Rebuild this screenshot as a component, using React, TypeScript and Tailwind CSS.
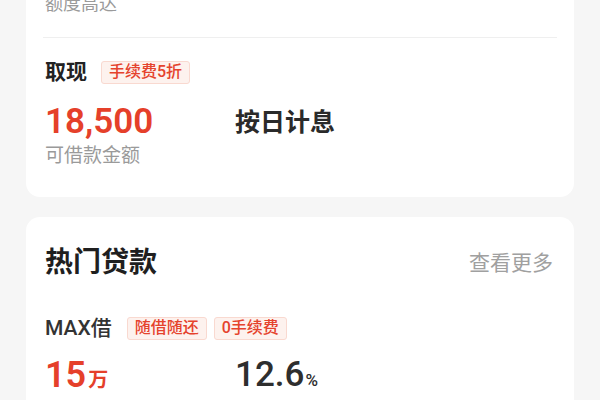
import React from "react";

const font = { fontFamily: '"Roboto", "Noto Sans CJK SC", sans-serif' };

function Tag({ children }: { children: React.ReactNode }) {
  return (
    <span className="inline-flex h-[23px] items-center rounded-[3px] border border-[#f9d9d0] bg-[#fdf2ee] px-[7px] text-[16px] font-medium leading-none text-[#e5432d]">
      {children}
    </span>
  );
}

export default function App() {
  return (
    <div style={font} className="h-[400px] w-[600px] overflow-hidden bg-[#f6f6f6] px-[26px]">
      <div className="rounded-b-[14px] bg-white px-[19px] pb-[29px]">
        <div className="mt-[-8px] h-[24px] text-[18px] leading-[24px] text-[#9a9a9a]">额度高达</div>
        <div className="mr-[-2px] ml-[-2px] mt-[21px] h-px bg-[#efefef]" />
        <div className="mt-[22px] flex h-[24px] items-center">
          <span className="text-[21px] font-bold leading-none text-[#222]">取现</span>
          <span className="ml-[14px]">
            <Tag>手续费5折</Tag>
          </span>
        </div>
        <div className="mt-[18px] flex h-[40px] items-center">
          <span className="w-[190px] text-[35px] font-semibold leading-[40px] text-[#e5402a]">18,500</span>
          <span className="text-[25px] font-bold leading-none text-[#2a2a2a]">按日计息</span>
        </div>
        <div className="mt-[2px] h-[24px] text-[19px] leading-[24px] text-[#9a9a9a]">可借款金额</div>
      </div>

      <div className="mt-[20px] rounded-[14px] bg-white pl-[19px] pr-[21px] pt-[28px]">
        <div className="flex h-[36px] items-center justify-between">
          <span className="text-[28px] font-bold leading-none text-[#1f1f1f]">热门贷款</span>
          <span className="text-[21px] leading-none text-[#a0a0a0]">查看更多</span>
        </div>
        <div className="mt-[35px] flex h-[24px] items-center">
          <span className="text-[21px] font-medium leading-none text-[#333]">MAX借</span>
          <span className="ml-[15px] flex gap-[7px]">
            <Tag>随借随还</Tag>
            <Tag>0手续费</Tag>
          </span>
        </div>
        <div className="mt-[15px] flex h-[40px] items-end">
          <span className="flex w-[190px] items-baseline text-[#e5402a]">
            <span className="text-[36px] font-semibold leading-[40px]">15</span>
            <span className="ml-[2px] text-[20px] font-semibold leading-none">万</span>
          </span>
          <span className="flex items-baseline text-[#2e2e2e]">
            <span className="text-[35px] font-medium leading-[40px]">12.6</span>
            <span className="ml-[1px] text-[17px] font-medium leading-none">%</span>
          </span>
        </div>
        <div className="mt-[8px] flex h-[24px] text-[18px] leading-[24px] text-[#9a9a9a]">
          <span className="w-[190px]">最高可借</span>
          <span>参考年利率</span>
        </div>
      </div>
    </div>
  );
}
